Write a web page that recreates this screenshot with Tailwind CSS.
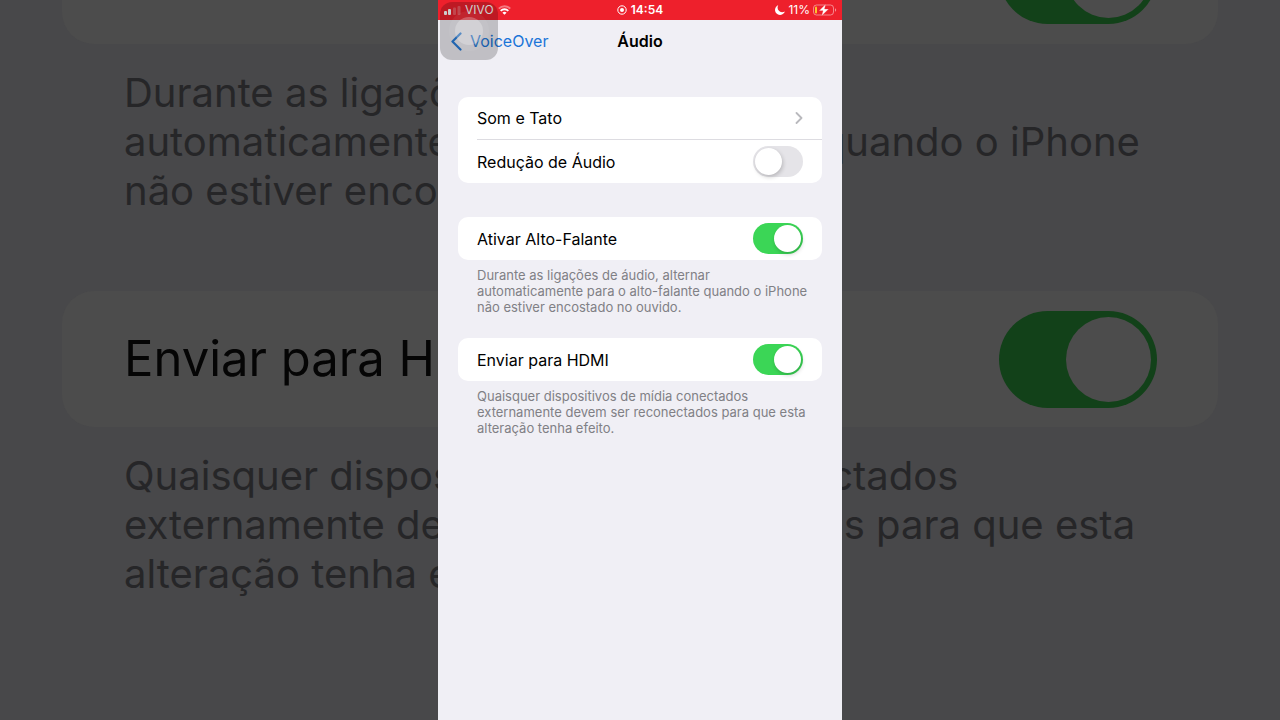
<!DOCTYPE html>
<html lang="pt-BR">
<head>
  <meta charset="UTF-8" />
  <meta name="viewport" content="width=device-width, initial-scale=1.0" />
  <title>VoiceOver - Áudio</title>
  <script src="https://cdn.jsdelivr.net/npm/@tailwindcss/browser@4"></script>
</head>

<body class="relative min-h-screen overflow-hidden bg-[#48484a] font-[Inter,'Liberation_Sans',sans-serif]">

  <!-- Enlarged, dimmed copy of the settings behind the phone -->
  <div class="absolute inset-0 overflow-hidden px-[62px]" aria-hidden="true" inert>
    <div class="flex h-11 items-end justify-end rounded-b-[32px] bg-[#4c4c4c] pr-[61px] pb-5">
      <input type="checkbox" checked aria-label="Ativar Alto-Falante" class="relative h-[97px] w-[158px] shrink-0 appearance-none rounded-full bg-[#124119] before:absolute before:top-[6px] before:right-[6px] before:size-[85px] before:rounded-full before:bg-[#4c4c4c]" />
    </div>
    <p class="mt-6 px-[62px] text-[40px] leading-[49px] whitespace-nowrap text-[#262628]">
      Durante as ligações de áudio, alternar<br />
      automaticamente para o alto-falante quando o iPhone<br />
      não estiver encostado no ouvido.
    </p>
    <div class="mt-[76px] flex h-[136px] items-center justify-between rounded-[32px] bg-[#4c4c4c] pr-[61px] pl-[62px]">
      <label for="hdmi-large" class="text-[49px] text-[#050505]">Enviar para HDMI</label>
      <input id="hdmi-large" type="checkbox" checked class="relative h-[97px] w-[158px] shrink-0 appearance-none rounded-full bg-[#124119] before:absolute before:top-[6px] before:right-[6px] before:size-[85px] before:rounded-full before:bg-[#4c4c4c]" />
    </div>
    <p class="mt-6 px-[62px] text-[40px] leading-[49px] whitespace-nowrap text-[#262628]">
      Quaisquer dispositivos de mídia conectados<br />
      externamente devem ser reconectados para que esta<br />
      alteração tenha efeito.
    </p>
  </div>

  <div class="relative mx-auto min-h-screen w-full max-w-[404px] bg-[#f0eff5]">

    <!-- Status bar -->
    <div class="grid h-5 grid-cols-3 items-center bg-[#ee202c] px-[6px] text-xs text-white">
      <div class="flex items-center gap-1">
        <svg class="h-[9px] w-[17px]" viewBox="0 0 17 9" fill="currentColor">
          <rect x="0" y="5" width="3" height="4" rx="1" />
          <rect x="4" y="3" width="3" height="6" rx="1" />
          <rect x="9" y="1.500" width="3" height="7.500" rx="1" opacity=".25" />
          <rect x="13.500" y="0" width="3" height="9" rx="1" opacity=".25" />
        </svg>
        <span>VIVO</span>
        <svg class="h-[10px] w-[13px]" viewBox="0 0 13 10" fill="none" stroke="currentColor" stroke-width="2">
          <path d="M.8 3.600a8.200 8.200 0 0 1 11.400 0" opacity=".4" />
          <path d="M2.700 5.900a5.400 5.400 0 0 1 7.600 0" />
          <path d="M6.500 9.800 4.400 7.700a3 3 0 0 1 4.200 0z" fill="currentColor" stroke="none" />
        </svg>
      </div>
      <div class="flex items-center justify-center gap-1 font-semibold">
        <svg class="size-[10px]" viewBox="0 0 10 10" fill="none" stroke="currentColor">
          <circle cx="5" cy="5" r="4.200" />
          <circle cx="5" cy="5" r="2" fill="currentColor" stroke="none" />
        </svg>
        <span>14:54</span>
      </div>
      <div class="flex items-center justify-end gap-[3px]">
        <svg class="size-[10px]" viewBox="0 0 10 10" fill="currentColor">
          <path d="M3.200.3A5 5 0 1 0 9.800 6.500 4.700 4.700 0 0 1 3.200.3z" />
        </svg>
        <span>11%</span>
        <svg class="-mr-px h-3 w-6" viewBox="0 0 24 12">
          <rect x=".5" y="1" width="20" height="10" rx="3" fill="none" stroke="#fff" stroke-opacity=".45" />
          <path d="M22 4.300c1.600.6 1.600 2.800 0 3.400z" fill="#fff" fill-opacity=".5" />
          <rect x="2" y="2.500" width="2" height="7" rx="1" fill="#fdc52c" />
          <path d="M12.800 0 6 6.800h4L8.500 12l7.200-7h-4.100z" fill="#fff" stroke="#ee202c" stroke-width=".3" />
        </svg>
      </div>
    </div>

    <!-- Navigation bar -->
    <header class="grid h-[42px] grid-cols-3 items-center px-3 text-base">
      <a href="#" class="flex items-center gap-2 text-[#1b75d8]">
        <svg class="h-[19px] w-3" viewBox="0 0 12 19" fill="none" stroke="currentColor" stroke-width="2.200" stroke-linecap="round" stroke-linejoin="round">
          <path d="M10.500 1.500 2.500 9.500l8 8" />
        </svg>
        VoiceOver
      </a>
      <h1 class="text-center font-semibold text-black">Áudio</h1>
    </header>

    <main class="px-5 pt-[35px] text-base text-black">
      <section class="rounded-[10px] bg-white pl-[19px]">
        <a href="#" class="flex h-[43px] items-center justify-between border-b border-[#dddce1] pr-[19px]">
          Som e Tato
          <svg class="h-3 w-2" viewBox="0 0 8 12" fill="none" stroke="#b9b9bd" stroke-width="1.800" stroke-linecap="round" stroke-linejoin="round">
            <path d="M1.500 1 6.500 6l-5 5" />
          </svg>
        </a>
        <div class="flex h-[43px] items-center justify-between pr-[19px]">
          <label for="ducking">Redução de Áudio</label>
          <input id="ducking" type="checkbox" class="relative h-[31px] w-[50px] appearance-none rounded-full bg-[#e5e4e8] before:absolute before:top-[2px] before:left-[2px] before:size-[27px] before:rounded-full before:bg-white before:shadow-[1px_2px_4px_rgba(0,0,0,0.2)] checked:bg-[#3bd656] checked:before:left-[21px]" />
        </div>
      </section>

      <section class="mt-[34px] flex h-[43px] items-center justify-between rounded-[10px] bg-white px-[19px]">
        <label for="speaker">Ativar Alto-Falante</label>
        <input id="speaker" type="checkbox" checked class="relative h-[31px] w-[50px] appearance-none rounded-full bg-[#e5e4e8] before:absolute before:top-[2px] before:left-[2px] before:size-[27px] before:rounded-full before:bg-white before:shadow-[1px_2px_4px_rgba(0,0,0,0.2)] checked:bg-[#3bd656] checked:before:left-[21px]" />
      </section>
      <p class="mt-[7px] px-[19px] text-[13px] leading-4 whitespace-nowrap text-[#808085]">
        Durante as ligações de áudio, alternar<br />
        automaticamente para o alto-falante quando o iPhone<br />
        não estiver encostado no ouvido.
      </p>

      <section class="mt-[23px] flex h-[43px] items-center justify-between rounded-[10px] bg-white px-[19px]">
        <label for="hdmi">Enviar para HDMI</label>
        <input id="hdmi" type="checkbox" checked class="relative h-[31px] w-[50px] appearance-none rounded-full bg-[#e5e4e8] before:absolute before:top-[2px] before:left-[2px] before:size-[27px] before:rounded-full before:bg-white before:shadow-[1px_2px_4px_rgba(0,0,0,0.2)] checked:bg-[#3bd656] checked:before:left-[21px]" />
      </section>
      <p class="mt-[7px] px-[19px] text-[13px] leading-4 whitespace-nowrap text-[#808085]">
        Quaisquer dispositivos de mídia conectados<br />
        externamente devem ser reconectados para que esta<br />
        alteração tenha efeito.
      </p>
    </main>

    <!-- AssistiveTouch button -->
    <button type="button" aria-label="AssistiveTouch" class="absolute top-[2px] left-[2px] flex size-[58px] items-center justify-center rounded-xl bg-black/20">
      <span class="flex size-10 items-center justify-center rounded-full bg-white/5">
        <span class="size-7 rounded-full bg-white/25"></span>
      </span>
    </button>
  </div>

</body>
</html>
